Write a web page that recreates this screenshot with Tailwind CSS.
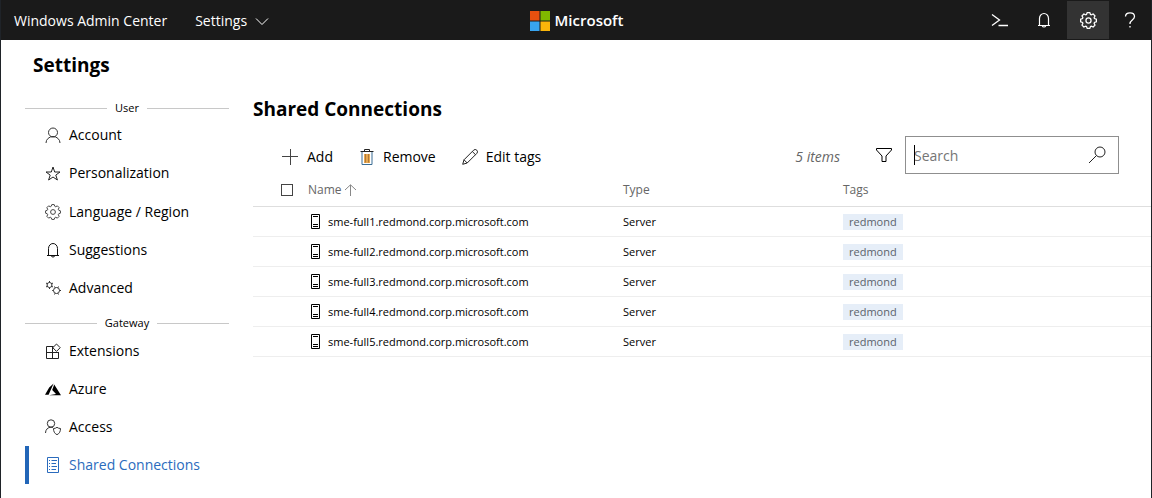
<!DOCTYPE html>
<html lang="en">
<head>
<meta charset="utf-8">
<meta name="viewport" content="width=device-width, initial-scale=1">
<title>Settings - Windows Admin Center</title>
<script src="https://cdn.jsdelivr.net/npm/@tailwindcss/browser@4"></script>
</head>
<body class="min-h-screen border-x border-[#1f2328] bg-white font-['Segoe_UI','Open_Sans',sans-serif] text-sm text-black">
<svg class="hidden">
  <symbol id="gear" viewBox="-8 -8 16 16"><path d="M-1.9-5.6-1.2-7.4H1.2L1.9-5.6 2.6-5.3 4.4-6.1 6.1-4.4 5.3-2.6 5.6-1.9 7.4-1.2V1.2L5.6 1.9 5.3 2.6 6.1 4.4 4.4 6.1 2.6 5.3 1.9 5.6 1.2 7.4H-1.2L-1.9 5.6-2.6 5.3-4.4 6.1-6.1 4.4-5.3 2.6-5.6 1.9-7.4 1.2V-1.2L-5.6-1.9-5.3-2.6-6.1-4.4-4.4-6.1-2.6-5.3Z"/><circle r="2.4"/></symbol>
  <symbol id="bell" viewBox="0 0 16 16"><path d="M2 13.5H14M3.5 13.5V6.500a4.500 5 0 0 1 9 0V13.500M6.300 14a1.800 1.500 0 0 0 3.400 0"/></symbol>
  <symbol id="server" viewBox="0 0 16 16"><path d="M3.500.5h8v14h-8zM5 2.500h5M5 10.500h5M5 12.500h5"/></symbol>
</svg>

<header class="grid h-10 grid-cols-[1fr_auto_1fr] items-center bg-[#1a1a1a] text-white">
  <div class="flex items-center gap-7 pt-px pl-[13px]">
    <a href="#">Windows Admin Center</a>
    <button type="button" class="flex items-center gap-2">Settings
      <svg class="h-4 w-[14px] fill-none stroke-current" viewBox="0 0 14 16"><path d="M1 5.500 7 11.500l6-6"/></svg>
    </button>
  </div>
  <a href="#" class="flex items-center gap-1 pt-px text-[15px] font-semibold">
    <svg class="size-[22px]" viewBox="0 0 22 22"><path fill="#e8500f" d="M1 1h9.500v9.500H1z"/><path fill="#7fb900" d="M11.500 1H21v9.500h-9.500z"/><path fill="#38a4ef" d="M1 11.500h9.500V21H1z"/><path fill="#f9b50a" d="M11.500 11.500H21V21h-9.500z"/></svg>
    Microsoft
  </a>
  <div class="flex items-center justify-self-end">
    <button type="button" aria-label="PowerShell" class="grid h-[38px] w-[42px] place-items-center"><svg class="size-[18px] fill-none stroke-current" viewBox="0 0 18 18"><path d="M1 3.500 8.500 9 1 14.500M7.500 14.500H17" stroke-width="1.300"/></svg></button>
    <button type="button" aria-label="Notifications" class="grid h-[38px] w-[46px] place-items-center"><svg class="size-4 fill-none stroke-current" stroke-width="1.200"><use href="#bell"/></svg></button>
    <button type="button" aria-label="Settings" class="grid h-[38px] w-[42px] place-items-center bg-[#333]"><svg class="size-[17px] fill-none stroke-current" stroke-width="1.200"><use href="#gear"/></svg></button>
    <button type="button" aria-label="Help" class="grid h-[38px] w-[42px] place-items-center"><svg class="size-4 fill-none stroke-current" viewBox="0 0 16 16"><path d="M3.500 4.500C3.500-.3 12.500-.3 12.500 4.500 12.500 7.800 8 8 8 11.500V12M8 14V15.500" stroke-width="1.300"/></svg></button>
  </div>
</header>

<h1 class="pt-3 pl-8 text-[19px] leading-[26px] font-bold">Settings</h1>

<div class="flex items-start">
  <nav class="ml-6 w-[204px] shrink-0 pt-[22px]">
    <h2 class="flex h-4 items-center gap-2 text-[11px] before:h-px before:flex-1 before:bg-[#c8c8c8] after:h-px after:flex-1 after:bg-[#c8c8c8]">User</h2>
    <ul>
      <li><a href="#" class="flex h-[38px] items-center gap-2 pl-5"><svg class="size-4 fill-none stroke-[#333]" viewBox="0 0 16 16"><circle cx="8" cy="5.500" r="4.500"/><path d="M1 16a7 6.500 0 0 1 14 0"/></svg>Account</a></li>
      <li><a href="#" class="flex h-[38px] items-center gap-2 pl-5"><svg class="size-4 fill-none stroke-[#222]" viewBox="0 0 16 16"><path d="M8 2 9.700 7H15L10.800 10.100 12.400 15 8 12 3.600 15 5.200 10.100 1 7H6.300Z"/></svg>Personalization</a></li>
      <li><a href="#" class="flex h-[38px] items-center gap-2 pt-px pl-5"><svg class="size-4 fill-none stroke-[#444]"><use href="#gear"/></svg>Language / Region</a></li>
      <li><a href="#" class="flex h-[38px] items-center gap-2 pt-px pl-5"><svg class="size-4 fill-none stroke-[#111]"><use href="#bell"/></svg>Suggestions</a></li>
      <li><a href="#" class="flex h-[38px] items-center gap-2 pt-px pl-5"><svg class="size-4 fill-none stroke-[#333]" viewBox="0 0 16 16"><circle cx="4.500" cy="5" r="2.500"/><path d="M4.500 1v1.500M4.500 7.500V9M1 3l1.400.8M8 3l-1.400.8M1 7l1.400-.8M8 7l-1.400-.8"/><circle cx="11.500" cy="10.500" r="3"/><path d="M9.500 6.500l.7 1.300M13.500 6.500l-.7 1.300M7.200 10.500H8.500M14.500 10.500H16M9.500 14.500l.7-1.300M13.500 14.500l-.7-1.300"/></svg>Advanced</a></li>
    </ul>
    <h2 class="mt-[9px] flex h-4 items-center gap-2 text-[11px] before:h-px before:flex-1 before:bg-[#c8c8c8] after:h-px after:flex-1 after:bg-[#c8c8c8]">Gateway</h2>
    <ul class="pt-px">
      <li><a href="#" class="flex h-[38px] items-center gap-2 pl-5"><svg class="size-4 fill-none stroke-[#222]" viewBox="0 0 16 16"><path d="M8.500 3.500h-7v12h12V9M1.500 9.500h12M7.500 3.500v12M11.500 1 15.200 4.700 11.500 8.400 7.800 4.700Z"/></svg>Extensions</a></li>
      <li><a href="#" class="flex h-[38px] items-center gap-2 pl-5"><svg class="size-4" viewBox="0 0 16 16"><path d="M8.600 2.500 4.200 6.400 0 13.800H3.600ZM9.200 3.600 7.200 9 11 13 4 14.200H16Z"/></svg>Azure</a></li>
      <li><a href="#" class="flex h-[38px] items-center gap-2 pl-5"><svg class="size-4 fill-none stroke-[#333]" viewBox="0 0 16 16"><circle cx="6" cy="4.500" r="3.700"/><path d="M.5 14C.5 10.500 3 8.200 6 8.200c.8 0 1.500.2 2 .4M8.500 9.500c1.500 0 2.500-.4 3.500-1.200 1 .8 2 1.200 3.500 1.200 0 3-1 5-3.500 6.200-2.500-1.200-3.500-3.200-3.500-6.200Z"/></svg>Access</a></li>
      <li><a href="#" aria-current="page" class="flex h-[38px] items-center gap-2 border-l-4 border-[#2266b8] pl-4 text-[#2a6bbd]"><svg class="size-4 fill-none stroke-current" viewBox="0 0 16 16"><path d="M2.500.5h11v15h-11zM4 3.500h1M6.500 3.500H12M4 6.500h1M6.500 6.500H11M4 9.500h1M6.500 9.500H12M4 12.500h1M6.500 12.500H11"/></svg>Shared Connections</a></li>
    </ul>
  </nav>

  <main class="ml-6 min-w-0 flex-1 pt-[18px]">
    <h2 class="text-[19px] leading-[26px] font-bold">Shared Connections</h2>
    <div class="mt-[14px] flex h-[38px] items-center pr-8">
      <div class="flex items-center gap-[26px] pt-[3px] pl-7">
        <button type="button" class="flex items-center gap-2"><svg class="size-[18px] shrink-0 fill-none stroke-[#444]" viewBox="0 0 18 18"><path d="M9.500 1v16M1 8.500h16"/></svg>Add</button>
        <button type="button" class="flex items-center gap-2"><svg class="size-4 fill-none stroke-[#222]" viewBox="0 0 16 16"><path class="fill-[#e8a850] stroke-none" d="M5 5h6v9H5z"/><path d="M1.500 2.500h13M5.500 2.500v-2h5v2" /><path class="stroke-[#3b6d94]" d="M3 3v12.500h10V3"/><path class="stroke-[#b07a3a]" d="M6.500 5v8.500M9.500 5v8.500"/></svg>Remove</button>
        <button type="button" class="flex items-center gap-2"><svg class="size-4 fill-none stroke-[#222]" viewBox="0 0 16 16"><path d="M.7 15.300 2 10.800 11.600 1.200a2 2 0 0 1 3.200 3.200L5.200 14ZM10.300 2.500l3.200 3.200M2 10.800 5.200 14"/></svg>Edit tags</button>
      </div>
      <p class="ml-auto pt-[3px] text-[#666] italic">5 items</p>
      <button type="button" aria-label="Filter" class="mr-[13px] ml-9"><svg class="size-4 fill-none stroke-black" viewBox="0 0 16 16"><path d="M.5 1.500h15v1.500l-5.500 6V14.500h-4V9L.5 3Z"/></svg></button>
      <div class="relative flex h-[38px] w-[214px] items-center border border-[#8f8f8f] pr-3 pl-2">
        <span class="absolute top-2 left-2 h-5 w-px bg-black"></span>
        <input type="text" aria-label="Search" placeholder="Search" class="min-w-0 flex-1 pt-px text-sm outline-none placeholder:text-[#757575]">
        <button type="button" aria-label="Run search"><svg class="size-[18px] fill-none stroke-[#222]" viewBox="0 0 18 18"><circle cx="12" cy="6" r="5"/><path d="M8.500 9.500 1 17"/></svg></button>
      </div>
    </div>

    <table class="w-full table-fixed border-collapse text-left text-[11px]">
      <colgroup><col class="w-[55px]"><col class="w-[315px]"><col class="w-[220px]"><col></colgroup>
      <thead>
        <tr class="h-8 border-b border-[#dedede] text-xs text-[#666]">
          <th class="pl-7 font-normal"><input type="checkbox" aria-label="Select all" class="block size-3 appearance-none border border-[#444] bg-white"></th>
          <th class="font-normal"><button type="button" class="flex items-center gap-[2px]">Name<svg class="size-3 fill-none stroke-[#888]" viewBox="0 0 12 12"><path d="M6.500 12V1M1 6 6.500.8 12 6"/></svg></button></th>
          <th class="font-normal">Type</th>
          <th class="font-normal">Tags</th>
        </tr>
      </thead>
      <tbody>
        <tr class="h-[30px] border-b border-[#eee]"><td></td><td class="pt-[2px]"><span class="flex items-center gap-1"><svg class="size-4 fill-none stroke-black"><use href="#server"/></svg>sme-full1.redmond.corp.microsoft.com</span></td><td class="pt-[2px]">Server</td><td class="pt-[2px]"><span class="inline-block bg-[#e6eef8] px-[6px] leading-4 text-[#5a626b]">redmond</span></td></tr>
        <tr class="h-[30px] border-b border-[#eee]"><td></td><td class="pt-[2px]"><span class="flex items-center gap-1"><svg class="size-4 fill-none stroke-black"><use href="#server"/></svg>sme-full2.redmond.corp.microsoft.com</span></td><td class="pt-[2px]">Server</td><td class="pt-[2px]"><span class="inline-block bg-[#e6eef8] px-[6px] leading-4 text-[#5a626b]">redmond</span></td></tr>
        <tr class="h-[30px] border-b border-[#eee]"><td></td><td class="pt-[2px]"><span class="flex items-center gap-1"><svg class="size-4 fill-none stroke-black"><use href="#server"/></svg>sme-full3.redmond.corp.microsoft.com</span></td><td class="pt-[2px]">Server</td><td class="pt-[2px]"><span class="inline-block bg-[#e6eef8] px-[6px] leading-4 text-[#5a626b]">redmond</span></td></tr>
        <tr class="h-[30px] border-b border-[#eee]"><td></td><td class="pt-[2px]"><span class="flex items-center gap-1"><svg class="size-4 fill-none stroke-black"><use href="#server"/></svg>sme-full4.redmond.corp.microsoft.com</span></td><td class="pt-[2px]">Server</td><td class="pt-[2px]"><span class="inline-block bg-[#e6eef8] px-[6px] leading-4 text-[#5a626b]">redmond</span></td></tr>
        <tr class="h-[30px] border-b border-[#eee]"><td></td><td class="pt-[2px]"><span class="flex items-center gap-1"><svg class="size-4 fill-none stroke-black"><use href="#server"/></svg>sme-full5.redmond.corp.microsoft.com</span></td><td class="pt-[2px]">Server</td><td class="pt-[2px]"><span class="inline-block bg-[#e6eef8] px-[6px] leading-4 text-[#5a626b]">redmond</span></td></tr>
      </tbody>
    </table>
  </main>
</div>
</body>
</html>
